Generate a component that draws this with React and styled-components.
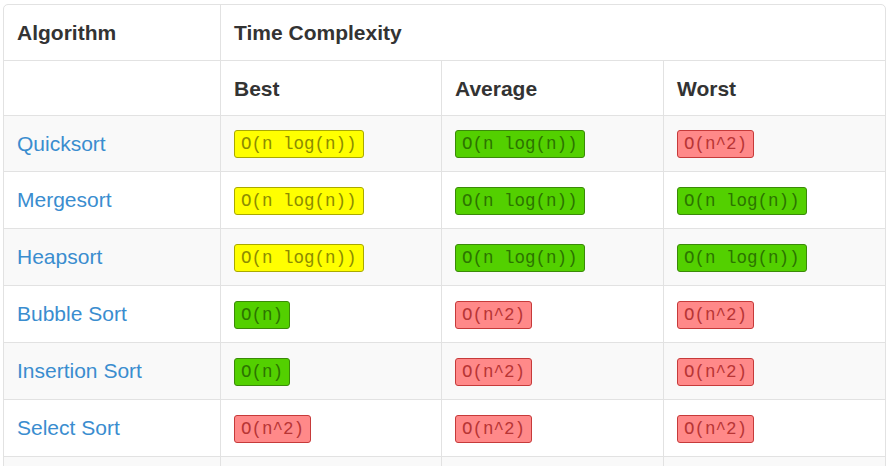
import React from 'react';
import styled, { createGlobalStyle } from 'styled-components';

const GlobalStyle = createGlobalStyle`
  html, body {
    margin: 0;
    padding: 0;
    background: #fff;
  }
  body {
    font-family: "Liberation Sans", Arial, sans-serif;
    color: #333;
  }
`;

const Wrapper = styled.div`
  padding: 4px 0 0 3px;
`;

const Table = styled.table`
  width: 883px;
  border-collapse: separate;
  border-spacing: 0;
  border: 1px solid #e2e2e2;
  border-radius: 5px;
  table-layout: fixed;
  font-size: 21px;
`;

const HeadCell = styled.th`
  box-sizing: border-box;
  height: 55px;
  text-align: left;
  font-weight: bold;
  color: #333;
  padding: 0 13px;
  line-height: 29px;
  vertical-align: middle;
  border-top: ${(p) => (p.$first ? 'none' : '1px solid #e2e2e2')};
  border-left: ${(p) => (p.$edge ? 'none' : '1px solid #e2e2e2')};
`;

const Row = styled.tr`
  background: ${(p) => (p.$striped ? '#f9f9f9' : '#fff')};
`;

const Cell = styled.td`
  box-sizing: border-box;
  height: ${(p) => (p.$short ? '56px' : '57px')};
  padding: 0 13px;
  line-height: 28px;
  vertical-align: middle;
  border-top: 1px solid #e2e2e2;
  border-left: ${(p) => (p.$edge ? 'none' : '1px solid #e2e2e2')};
`;

const Link = styled.a`
  color: #3a8dcf;
  text-decoration: none;
`;

const palette = {
  yellow: { bg: '#ffff00', border: '#a9a900', text: '#8c8c00' },
  green: { bg: '#53d000', border: '#3a8a08', text: '#2c7400' },
  red: { bg: '#ff8989', border: '#c63a3a', text: '#b83535' },
};

const Badge = styled.code`
  display: inline-block;
  vertical-align: middle;
  box-sizing: border-box;
  height: 28px;
  font-family: "Liberation Mono", "DejaVu Sans Mono", monospace;
  font-size: 17.5px;
  line-height: 26px;
  padding: 0 6px;
  border-radius: 3px;
  background: ${(p) => palette[p.$tone].bg};
  border: 1px solid ${(p) => palette[p.$tone].border};
  color: ${(p) => palette[p.$tone].text};
`;

const rows = [
  { name: 'Quicksort', cells: [['O(n log(n))', 'yellow'], ['O(n log(n))', 'green'], ['O(n^2)', 'red']] },
  { name: 'Mergesort', cells: [['O(n log(n))', 'yellow'], ['O(n log(n))', 'green'], ['O(n log(n))', 'green']] },
  { name: 'Heapsort', cells: [['O(n log(n))', 'yellow'], ['O(n log(n))', 'green'], ['O(n log(n))', 'green']] },
  { name: 'Bubble Sort', cells: [['O(n)', 'green'], ['O(n^2)', 'red'], ['O(n^2)', 'red']] },
  { name: 'Insertion Sort', cells: [['O(n)', 'green'], ['O(n^2)', 'red'], ['O(n^2)', 'red']] },
  { name: 'Select Sort', cells: [['O(n^2)', 'red'], ['O(n^2)', 'red'], ['O(n^2)', 'red']] },
];

const App = () => (
  <>
    <GlobalStyle />
    <Wrapper>
      <Table>
        <colgroup>
          <col style={{ width: 216 }} />
          <col style={{ width: 221 }} />
          <col style={{ width: 222 }} />
          <col style={{ width: 222 }} />
        </colgroup>
        <thead>
          <tr>
            <HeadCell $first $edge>Algorithm</HeadCell>
            <HeadCell $first colSpan={3}>Time Complexity</HeadCell>
          </tr>
          <tr>
            <HeadCell $edge></HeadCell>
            <HeadCell>Best</HeadCell>
            <HeadCell>Average</HeadCell>
            <HeadCell>Worst</HeadCell>
          </tr>
        </thead>
        <tbody>
          {rows.map((row, i) => (
            <Row key={row.name} $striped={i % 2 === 0}>
              <Cell $edge $short={i === 0}>
                <Link href="#">{row.name}</Link>
              </Cell>
              {row.cells.map(([label, t], j) => (
                <Cell key={j} $short={i === 0}>
                  <Badge $tone={t}>{label}</Badge>
                </Cell>
              ))}
            </Row>
          ))}
          <Row $striped>
            <Cell $edge />
            <Cell />
            <Cell />
            <Cell />
          </Row>
        </tbody>
      </Table>
    </Wrapper>
  </>
);

export default App;
